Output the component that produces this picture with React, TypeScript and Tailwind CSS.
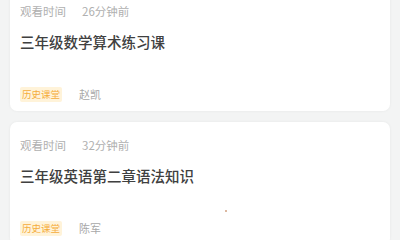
import React from "react";

const items = [
  { ago: "26分钟前", title: "三年级数学算术练习课", teacher: "赵凯", dot: false },
  { ago: "32分钟前", title: "三年级英语第二章语法知识", teacher: "陈军", dot: true },
];

export default function App() {
  return (
    <div
      className="w-[400px] h-[240px] overflow-hidden bg-[#f3f4f4]"
      style={{ fontFamily: '"Noto Sans CJK SC", "Noto Sans", sans-serif' }}
    >
      <div className="flex flex-col gap-[11px] px-[10px] mt-[-12px]">
        {items.map((it) => (
          <div
            key={it.title}
            className="relative h-[123px] rounded-[7px] bg-white shadow-[0_0_3px_rgba(0,0,0,0.06)] pl-[10px] pt-[15px]"
          >
            <div className="flex items-center h-[16px] text-[11.5px] text-[#b0b0b0] leading-[16px]">
              <span>观看时间</span>
              <span className="ml-[16px]">{it.ago}</span>
            </div>
            <div className="mt-[13px] h-[20px] leading-[20px] text-[14.5px] text-[#404040] font-medium">
              {it.title}
            </div>
            <div className="mt-[34px] flex items-center h-[16px]">
              <span className="h-[15px] px-[2px] rounded-[2px] bg-[#fff3d9] text-[#f5ad3c] text-[9.5px] leading-[15px]">
                历史课堂
              </span>
              <span className="ml-[17px] text-[11px] text-[#a8a8a8] leading-[16px]">{it.teacher}</span>
            </div>
            {it.dot && (
              <span className="absolute left-[215px] top-[88px] w-[2px] h-[2px] rounded-full bg-[#d0a080]" />
            )}
          </div>
        ))}
      </div>
    </div>
  );
}
